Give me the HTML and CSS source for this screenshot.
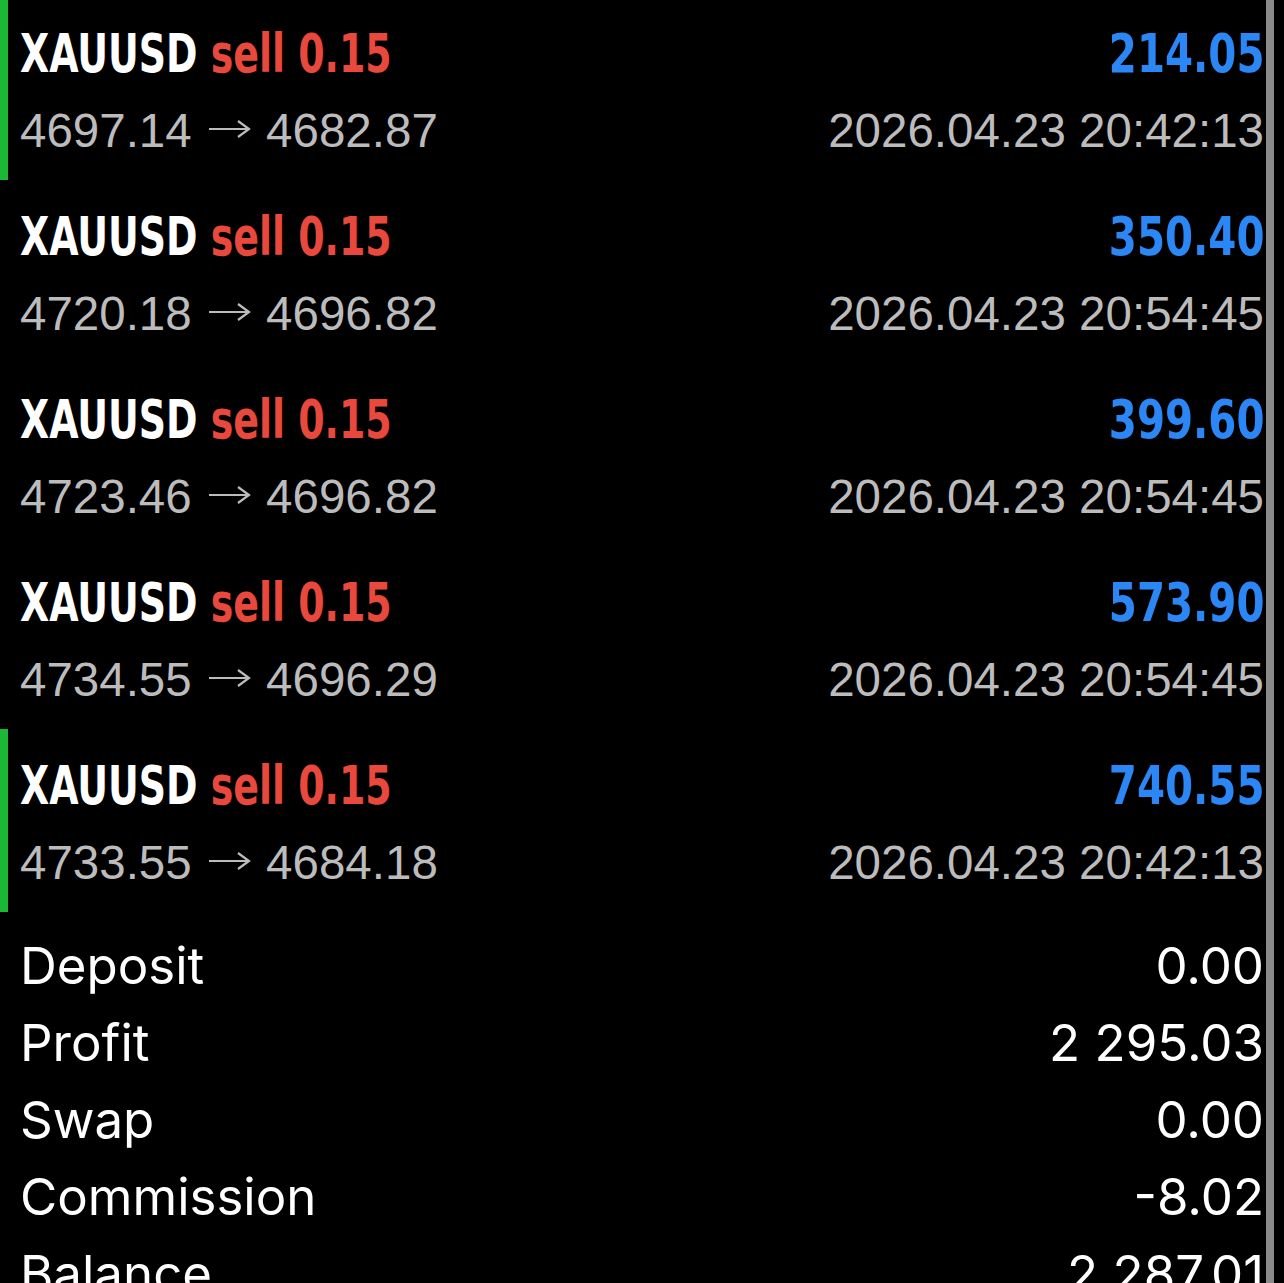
FILE: index.html
```html
<!DOCTYPE html>
<html lang="en">
<head>
    <meta charset="UTF-8">
    <meta name="viewport" content="width=device-width, initial-scale=1.0">
    <title>History</title>
    <link rel="stylesheet" href="styles.css">
</head>
<body>
    <div class="deals">
        <div class="deal marked">
            <div class="line">
                <span class="title"><span class="sym">XAUUSD</span> <span class="side">sell 0.15</span></span>
                <span class="profit">214.05</span>
            </div>
            <div class="line sub">
                <span>4697.14 <svg class="arrow" width="44" height="20" viewBox="0 0 44 20"><path d="M2 10H42M31 2L42 10L31 18"/></svg> 4682.87</span>
                <span>2026.04.23 20:42:13</span>
            </div>
        </div>
        <div class="deal">
            <div class="line">
                <span class="title"><span class="sym">XAUUSD</span> <span class="side">sell 0.15</span></span>
                <span class="profit">350.40</span>
            </div>
            <div class="line sub">
                <span>4720.18 <svg class="arrow" width="44" height="20" viewBox="0 0 44 20"><path d="M2 10H42M31 2L42 10L31 18"/></svg> 4696.82</span>
                <span>2026.04.23 20:54:45</span>
            </div>
        </div>
        <div class="deal">
            <div class="line">
                <span class="title"><span class="sym">XAUUSD</span> <span class="side">sell 0.15</span></span>
                <span class="profit">399.60</span>
            </div>
            <div class="line sub">
                <span>4723.46 <svg class="arrow" width="44" height="20" viewBox="0 0 44 20"><path d="M2 10H42M31 2L42 10L31 18"/></svg> 4696.82</span>
                <span>2026.04.23 20:54:45</span>
            </div>
        </div>
        <div class="deal">
            <div class="line">
                <span class="title"><span class="sym">XAUUSD</span> <span class="side">sell 0.15</span></span>
                <span class="profit">573.90</span>
            </div>
            <div class="line sub">
                <span>4734.55 <svg class="arrow" width="44" height="20" viewBox="0 0 44 20"><path d="M2 10H42M31 2L42 10L31 18"/></svg> 4696.29</span>
                <span>2026.04.23 20:54:45</span>
            </div>
        </div>
        <div class="deal marked">
            <div class="line">
                <span class="title"><span class="sym">XAUUSD</span> <span class="side">sell 0.15</span></span>
                <span class="profit">740.55</span>
            </div>
            <div class="line sub">
                <span>4733.55 <svg class="arrow" width="44" height="20" viewBox="0 0 44 20"><path d="M2 10H42M31 2L42 10L31 18"/></svg> 4684.18</span>
                <span>2026.04.23 20:42:13</span>
            </div>
        </div>
    </div>
    <div class="summary">
        <div class="line"><span>Deposit</span><span>0.00</span></div>
        <div class="line"><span>Profit</span><span>2 295.03</span></div>
        <div class="line"><span>Swap</span><span>0.00</span></div>
        <div class="line"><span>Commission</span><span>-8.02</span></div>
        <div class="line"><span>Balance</span><span>2 287.01</span></div>
    </div>
    <div class="scrollbar"></div>
</body>
</html>
```
FILE: styles.css
```css
body {
    margin: 0;
    background: #000;
    color: #fff;
    font-family: 'Inter', 'Liberation Sans', sans-serif;
    overflow: hidden;
    height: 1283px;
    position: relative;
}
.deals {
    margin-top: -3px;
}
.deal {
    height: 183px;
    box-sizing: border-box;
    border-left: 8px solid transparent;
    padding: 20px 20px 0 12px;
}
.deal.marked {
    border-left-color: #1bb737;
}
.line {
    display: flex;
    justify-content: space-between;
    align-items: baseline;
    white-space: nowrap;
}
.title,
.profit {
    display: inline-block;
    font-family: 'DejaVu Sans Condensed', sans-serif;
    font-weight: bold;
    font-size: 54px;
    line-height: 74px;
}
/* condensed look of the app font */
.title {
    transform: scaleX(0.78);
    transform-origin: left;
}
.profit {
    color: #2b87f5;
    transform: scaleX(0.83);
    transform-origin: right;
}
.sym {
    color: #fff;
}
.side {
    color: #e8493c;
}
.sub {
    color: #bcbcbc;
    font-family: 'Liberation Sans', sans-serif;
    font-size: 47.5px;
    line-height: 79px;
}
.arrow {
    vertical-align: 8px;
    margin: 0 2px 0 2px;
}
.arrow path {
    fill: none;
    stroke: #bcbcbc;
    stroke-width: 2.2;
}
.summary {
    padding: 15px 20px 0 20px;
}
.summary .line {
    font-size: 51px;
    line-height: 77px;
}
.scrollbar {
    position: absolute;
    top: 0;
    right: 10px;
    width: 8px;
    height: 100%;
    background: #8a8a8a;
}
```
